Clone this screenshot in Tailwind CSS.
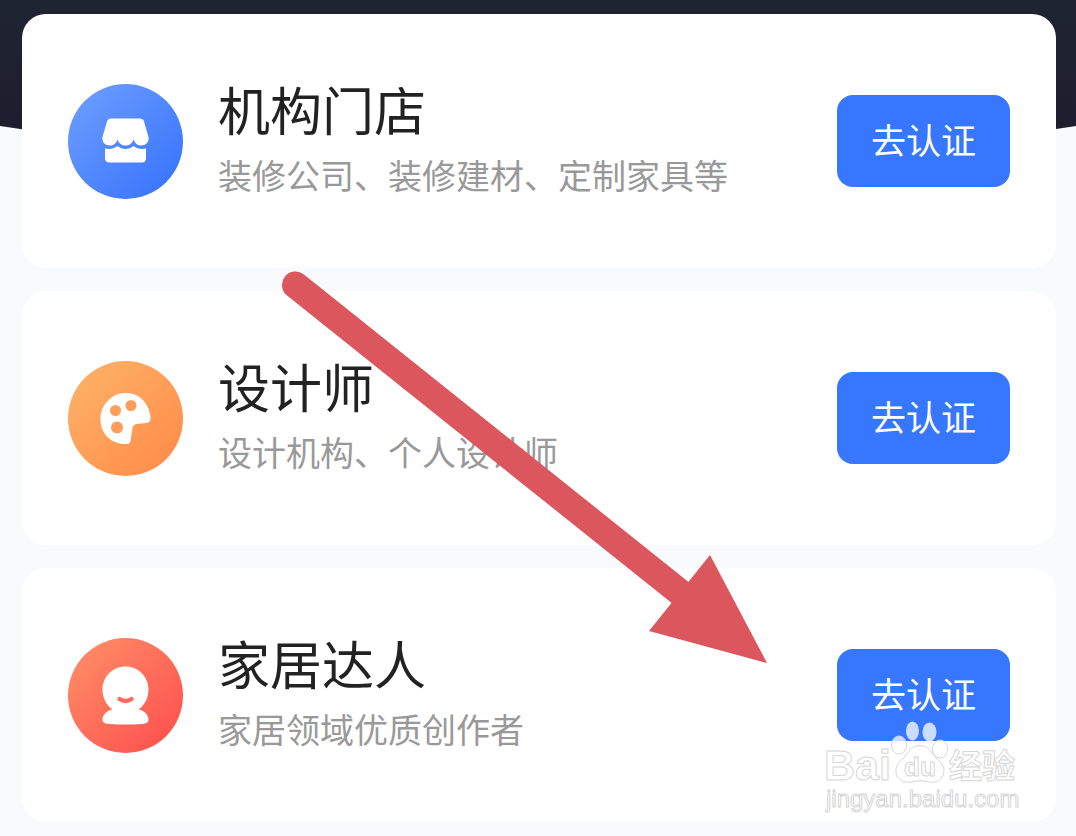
<!DOCTYPE html>
<html lang="zh-CN">
<head>
    <meta charset="UTF-8">
    <meta name="viewport" content="width=device-width, initial-scale=1.0">
    <title>身份认证</title>
    <script src="https://cdn.jsdelivr.net/npm/@tailwindcss/browser@4"></script>
</head>
<body class="bg-[#f9fafc] font-['Noto_Sans_CJK_SC',sans-serif] antialiased">
    <div class="relative min-h-screen overflow-hidden">
        <!-- dark header with curved bottom -->
        <svg class="absolute inset-x-0 top-0 w-full h-[170px]" viewBox="0 0 1076 170" preserveAspectRatio="none" aria-hidden="true">
            <defs>
                <linearGradient id="header-bg" x1="0" y1="0" x2="0" y2="1">
                    <stop offset="0" stop-color="#1f2432"/>
                    <stop offset="0.75" stop-color="#1d1e2f"/>
                </linearGradient>
            </defs>
            <path d="M0 0H1076V126Q538 210 0 126Z" fill="url(#header-bg)"/>
        </svg>

        <main class="relative flex flex-col gap-[23px] pt-[14px] pr-5 pb-[14px] pl-[22px]">
            <section class="flex items-center gap-[35px] h-[254px] px-[46px] bg-white rounded-3xl">
                <svg class="shrink-0 size-[115px]" viewBox="0 0 115 115" aria-hidden="true">
                    <defs>
                        <linearGradient id="blue" x1="0.1" y1="0.1" x2="0.9" y2="0.9">
                            <stop offset="0" stop-color="#6a9bff"/>
                            <stop offset="1" stop-color="#3a75fd"/>
                        </linearGradient>
                    </defs>
                    <circle cx="57.500" cy="57.500" r="57.500" fill="url(#blue)"/>
                    <path d="M43 34.500H72Q75 34.500 76 37.500L80.500 53C81.500 58 77.500 61.500 73 61.500C69.500 61.500 67 59.500 65.500 55.500C64 59.500 61.500 61.500 57.500 61.500C53.500 61.500 51 59.500 49.500 55.500C48 59.500 45.500 61.500 42 61.500C37.500 61.500 33.500 58 34.500 53L39 37.500Q40 34.500 43 34.500Z" fill="#fff"/>
                    <path d="M37 64.500C42 65.500 46 64.500 49.500 62C54 66 61 66 65.500 62C69 64.500 73 65.500 78 64.500V74Q78 78.500 73.500 78.500H41.500Q37 78.500 37 74Z" fill="#fff"/>
                </svg>
                <div class="flex-1 pb-1">
                    <h2 class="text-[52px] leading-[72px] text-[#222]">机构门店</h2>
                    <p class="text-[34px] leading-[60px] text-[#999]">装修公司、装修建材、定制家具等</p>
                </div>
                <button type="button" class="shrink-0 w-[173px] h-[92px] pb-1.5 rounded-2xl bg-[#3776fe] text-[35px] leading-none text-white">去认证</button>
            </section>

            <section class="flex items-center gap-[35px] h-[254px] px-[46px] bg-white rounded-3xl">
                <svg class="shrink-0 size-[115px]" viewBox="0 0 115 115" aria-hidden="true">
                    <defs>
                        <linearGradient id="orange" x1="0.1" y1="0.1" x2="0.9" y2="0.9">
                            <stop offset="0" stop-color="#ffb066"/>
                            <stop offset="1" stop-color="#ff8d4b"/>
                        </linearGradient>
                    </defs>
                    <circle cx="57.500" cy="57.500" r="57.500" fill="url(#orange)"/>
                    <path d="M56 32C70 31 81 41 82.500 56C82.700 60 81.500 61.500 78 62L68.500 63Q65 63.500 64.500 67L62.500 80Q62 83 58.500 83C42.500 83.500 32.500 72 32.500 58.500C32.500 44.500 42.500 33 56 32Z" fill="#fff"/>
                    <circle cx="63" cy="44.500" r="5.500" fill="#ff9d5a"/>
                    <circle cx="47.500" cy="49.500" r="5.500" fill="#ff9d5a"/>
                    <circle cx="49" cy="66.500" r="6" fill="#ff9d5a"/>
                </svg>
                <div class="flex-1 pb-1">
                    <h2 class="text-[52px] leading-[72px] text-[#222]">设计师</h2>
                    <p class="text-[34px] leading-[60px] text-[#999]">设计机构、个人设计师</p>
                </div>
                <button type="button" class="shrink-0 w-[173px] h-[92px] pb-1.5 rounded-2xl bg-[#3776fe] text-[35px] leading-none text-white">去认证</button>
            </section>

            <section class="flex items-center gap-[35px] h-[254px] px-[46px] bg-white rounded-3xl">
                <svg class="shrink-0 size-[115px]" viewBox="0 0 115 115" aria-hidden="true">
                    <defs>
                        <linearGradient id="red" x1="0.1" y1="0.1" x2="0.9" y2="0.9">
                            <stop offset="0" stop-color="#ff8a66"/>
                            <stop offset="1" stop-color="#ff524f"/>
                        </linearGradient>
                    </defs>
                    <circle cx="57.500" cy="57.500" r="57.500" fill="url(#red)"/>
                    <path d="M57.500 28.500C70.500 28.500 80.500 39 80.500 51.500C80.500 59.500 77 67 70.500 71.500C76 72 80.500 77 80.500 81.500C80.500 86 76 86.500 57.500 86.500C39 86.500 34.500 86 34.500 81.500C34.500 77 39 72 44.500 71.500C38 67 34.500 59.500 34.500 51.500C34.500 39 44.500 28.500 57.500 28.500Z" fill="#fff"/>
                    <path d="M51.500 61Q57.500 65 63.500 61" fill="none" stroke="#ff6c5b" stroke-width="4.500" stroke-linecap="round"/>
                </svg>
                <div class="flex-1 pb-1">
                    <h2 class="text-[52px] leading-[72px] text-[#222]">家居达人</h2>
                    <p class="text-[34px] leading-[60px] text-[#999]">家居领域优质创作者</p>
                </div>
                <button type="button" class="shrink-0 w-[173px] h-[92px] pb-1.5 rounded-2xl bg-[#3776fe] text-[35px] leading-none text-white">去认证</button>
            </section>
        </main>

        <!-- arrow pointing at the last button -->
        <svg class="absolute top-[260px] right-[296px] w-[500px] h-[410px] pointer-events-none" viewBox="280 260 500 410" aria-hidden="true">
            <path d="M295.500 285L682 594" stroke="#db575d" stroke-width="27" stroke-linecap="round"/>
            <path d="M710 555L767 663L649 631Z" fill="#db575d"/>
        </svg>

        <!-- watermark -->
        <svg class="absolute top-[716px] right-[50px] w-[206px] h-[104px] pointer-events-none" viewBox="820 716 206 104" role="img" aria-label="Baidu 经验">
            <g fill="#fff" fill-opacity="0.75" stroke="#d6d6d6" stroke-width="1">
                <ellipse cx="899" cy="745" rx="7.500" ry="9"/>
                <ellipse cx="912.500" cy="731" rx="6.500" ry="9.500" stroke="none"/>
                <ellipse cx="929.500" cy="732" rx="7" ry="9.500" stroke="none"/>
                <ellipse cx="940" cy="749" rx="7.500" ry="9"/>
                <path d="M920 745.500C929 745.500 931 753 937 759C943 765 945 768 943.500 774C941 783 932 783 926 781.500C922 780.500 918 780.500 914 781.500C907 783.500 898 782.500 896 773C895 766 899 762 904 757.500C909 752 911 745.500 920 745.500Z"/>
                <text x="824" y="780" font-family="Liberation Sans, sans-serif" font-weight="700" font-size="43">Bai</text>
                <text x="904" y="776" font-family="Liberation Sans, sans-serif" font-weight="700" font-size="26">du</text>
                <text x="949" y="778" font-family="Noto Sans CJK SC, sans-serif" font-weight="700" font-size="33">经验</text>
                <text x="826" y="807" font-family="Liberation Sans, sans-serif" font-size="24">jingyan.baidu.com</text>
            </g>
        </svg>
    </div>
</body>
</html>
